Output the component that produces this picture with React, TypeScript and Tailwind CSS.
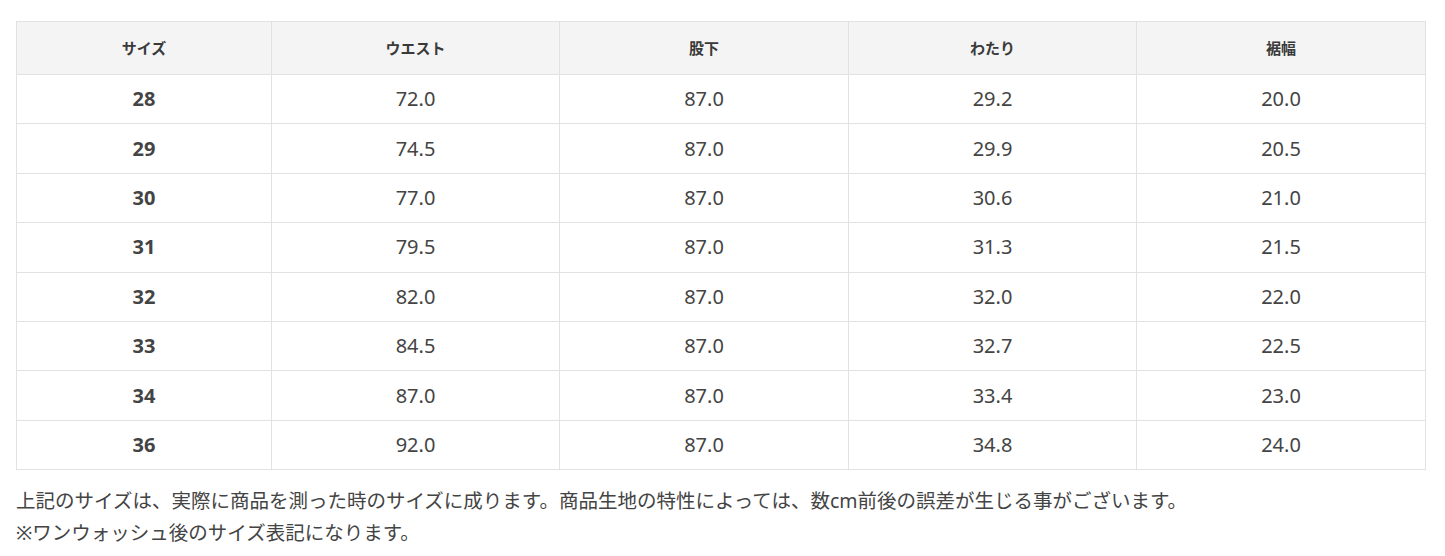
const HEAD = ["サイズ", "ウエスト", "股下", "わたり", "裾幅"];

const ROWS: [string, string, string, string, string][] = [
  ["28", "72.0", "87.0", "29.2", "20.0"],
  ["29", "74.5", "87.0", "29.9", "20.5"],
  ["30", "77.0", "87.0", "30.6", "21.0"],
  ["31", "79.5", "87.0", "31.3", "21.5"],
  ["32", "82.0", "87.0", "32.0", "22.0"],
  ["33", "84.5", "87.0", "32.7", "22.5"],
  ["34", "87.0", "87.0", "33.4", "23.0"],
  ["36", "92.0", "87.0", "34.8", "24.0"],
];

const WIDTHS = ["w-[255px]", "w-[288px]", "w-[289px]", "w-[288px]", "w-[289px]"];

const FONT = "font-['Noto_Sans','Noto_Sans_CJK_JP',sans-serif]";

export default function App() {
  return (
    <div className={`bg-white px-4 pt-[21px] text-[#333] ${FONT}`}>
      <table className="w-[1410px] table-fixed border-collapse border border-[#e2e2e2]">
        <thead>
          <tr className="h-[53px] bg-[#f4f4f4]">
            {HEAD.map((h, i) => (
              <th
                key={h}
                className={`${WIDTHS[i]} border border-[#e2e2e2] text-center text-[15px] font-bold text-[#3a3a3a]`}
              >
                {h}
              </th>
            ))}
          </tr>
        </thead>
        <tbody>
          {ROWS.map((r) => (
            <tr key={r[0]} className="h-[49.4px]">
              {r.map((v, i) => (
                <td
                  key={i}
                  className={`border border-[#e2e2e2] text-center text-[20px] text-[#444] ${
                    i === 0 ? "font-bold" : ""
                  }`}
                >
                  {v}
                </td>
              ))}
            </tr>
          ))}
        </tbody>
      </table>

      {/* notes under the table */}
      <div className="mt-[15px] text-[19.5px] leading-[32px] text-[#444]">
        <p>
          上記のサイズは、実際に商品を測った時のサイズに成ります。商品生地の特性によっては、数cm前後の誤差が生じる事がございます。
        </p>
        <p>※ワンウォッシュ後のサイズ表記になります。</p>
      </div>
    </div>
  );
}
